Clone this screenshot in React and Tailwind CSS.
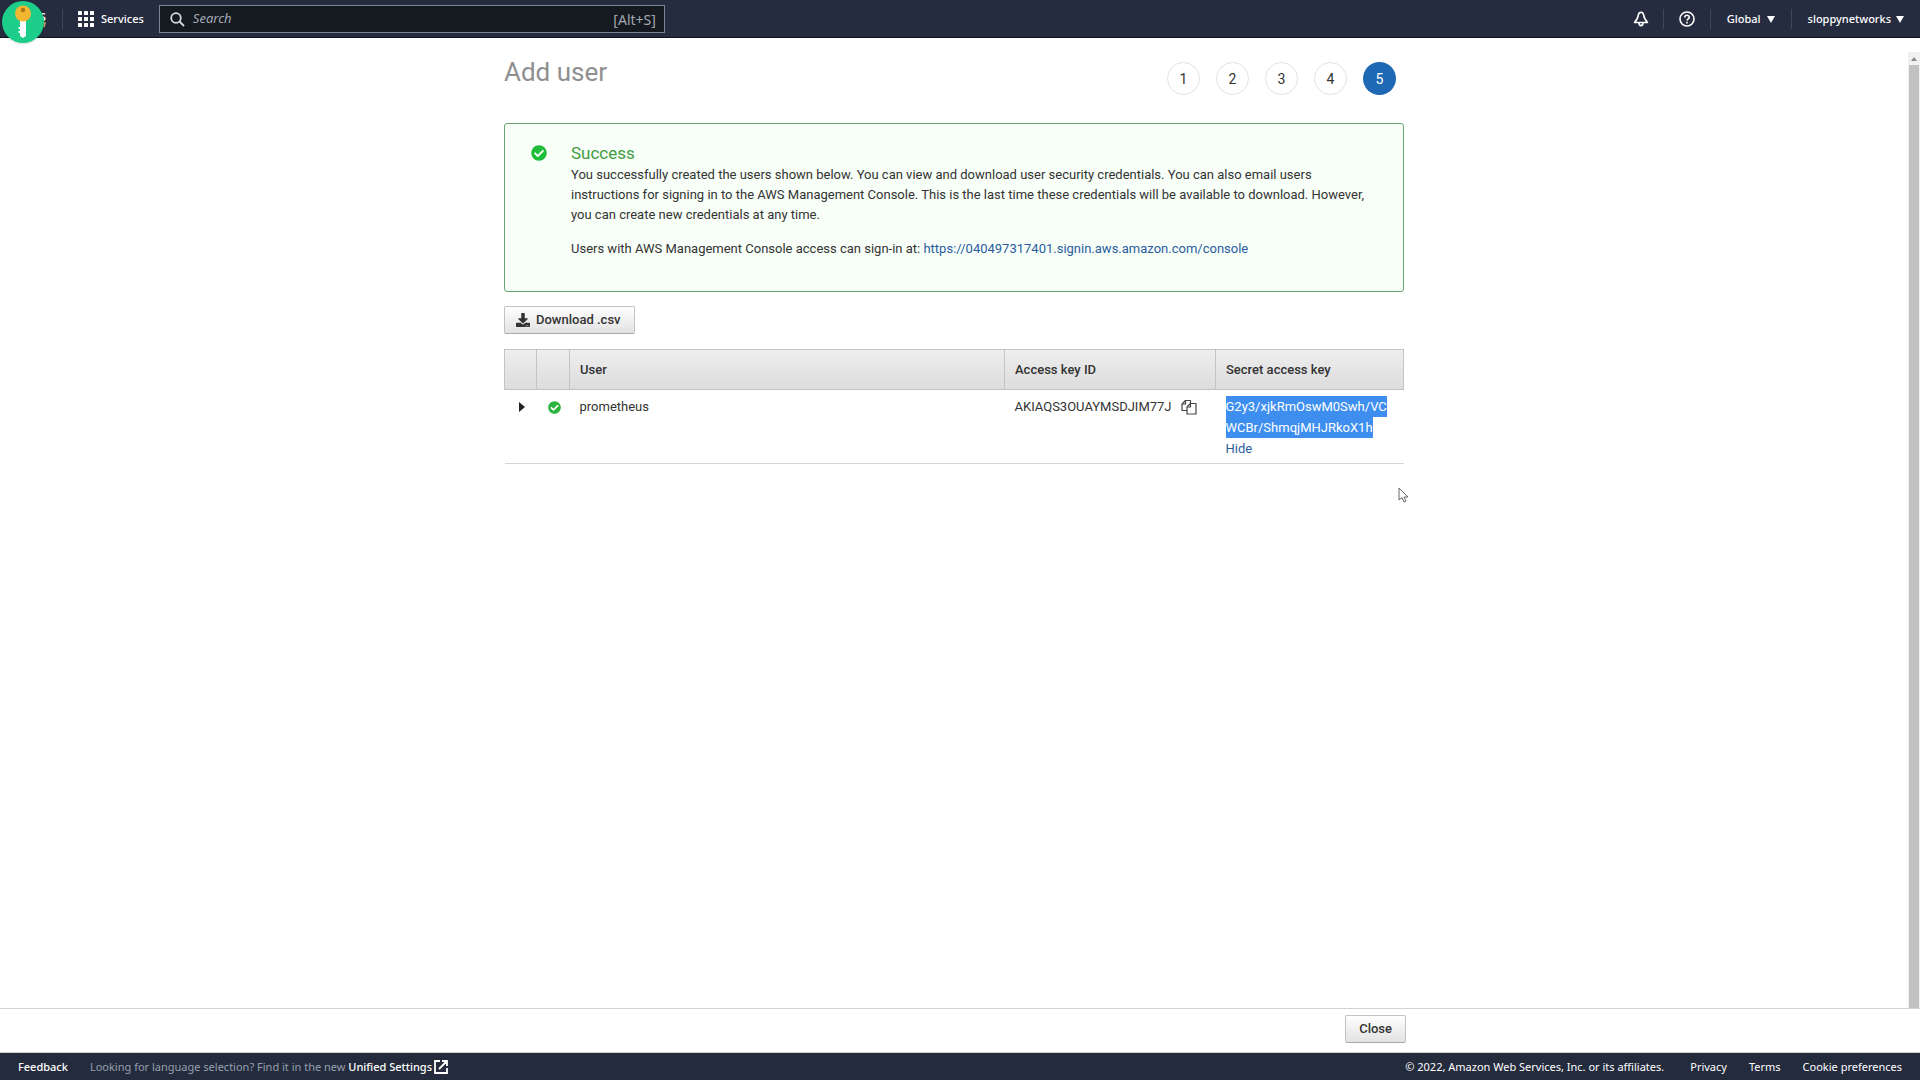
import React, { useState } from "react";
import { FaCheckCircle, FaDownload } from "react-icons/fa";

const STEPS = [1, 2, 3, 4, 5];

const USERS = [
  {
    name: "prometheus",
    accessKeyId: "AKIAQS3OUAYMSDJIM77J",
    secret: ["G2y3/xjkRmOswM0Swh/VC", "WCBr/ShmqjMHJRkoX1h"],
  },
];

const Divider = () => <div className="h-5 w-px bg-[#3f4658]" />;

const Caret = () => (
  <svg width="8" height="7" viewBox="0 0 8 7" fill="currentColor">
    <path d="M0 0h8L4 7z" />
  </svg>
);

const KeyBadge = () => (
  <div className="absolute left-0.5 top-px z-10 flex h-[42px] w-[42px] items-center justify-center rounded-full bg-[#1dce8a] shadow">
    <svg width="18" height="34" viewBox="0 0 18 34">
      <path d="M6 14h6v17l-3 2-3-2v-3h-1.500v-2H6v-2H4.500v-2H6z" fill="#fff" />
      <circle cx="9" cy="8.500" r="8" fill="#f2b632" />
      <circle cx="9" cy="5" r="2.200" fill="#a87716" />
    </svg>
  </div>
);

const Header = () => (
  <header className="relative flex h-[38px] items-center border-b border-[#0d111c] bg-[#262c3f] pt-px text-[11px] font-medium text-white">
    <KeyBadge />
    <a href="#home" className="flex w-[62px] flex-col items-end pr-4 leading-none">
      <span className="text-sm leading-3">aws</span>
      <svg width="24" height="7" viewBox="0 0 24 7" fill="none" stroke="#e0a070" strokeWidth="1.500">
        <path d="M1 1c6 5 14 5 20 2M19 1h4l-1 4" />
      </svg>
    </a>
    <Divider />
    <button className="ml-[15px] flex items-center gap-[7px]">
      <svg width="16" height="16" viewBox="0 0 16 16" fill="#fff">
        {[0, 6, 12].map((y) =>
          [0, 6, 12].map((x) => (
            <rect key={`${x}-${y}`} x={x} y={y} width="4" height="4" rx="0.500" />
          ))
        )}
      </svg>
      Services
    </button>
    <div className="ml-[15px] flex h-7 w-[506px] items-center border border-[#7d8594] bg-[#151920] pl-2.5 pr-2 text-[14px] font-normal text-[#a3a9b3]">
      <svg width="15" height="15" viewBox="0 0 15 15" fill="none" stroke="#d5dbdb" strokeWidth="1.800">
        <circle cx="6" cy="6" r="4.800" />
        <path d="M9.500 9.500L14 14" />
      </svg>
      <input
        type="text"
        aria-label="Search"
        placeholder="Search"
        className="ml-2 min-w-0 flex-1 bg-transparent text-[13px] italic outline-none placeholder:text-[#a3a9b3]"
      />
      <span>[Alt+S]</span>
    </div>
    <div className="ml-auto flex items-center">
      <button aria-label="Notifications" className="mr-[14px]">
        <svg width="16" height="16" viewBox="0 0 16 16" fill="none" stroke="#fff" strokeWidth="1.600" strokeLinejoin="round">
          <path d="M8 1.200c-1.800 0-2.500 1.300-2.800 3.300C5 7 4.500 8 1.500 11.500h13C11.500 8 11 7 10.800 4.500 10.500 2.500 9.800 1.200 8 1.200z" />
          <path d="M6 12c0 3.500 4 3.500 4 0" />
        </svg>
      </button>
      <Divider />
      <button aria-label="Help" className="mx-[15px]">
        <svg width="16" height="16" viewBox="0 0 16 16" fill="none" stroke="#fff" strokeWidth="1.600">
          <circle cx="8" cy="8" r="7" />
          <path d="M5.800 6.500c0-3 4.500-2.800 4.500-.3C10.300 7.800 8 7.800 8 9.600" />
          <path d="M8 10.800v1.600" />
        </svg>
      </button>
      <Divider />
      <button className="mx-4 flex items-center gap-1.5">
        Global <Caret />
      </button>
      <Divider />
      <button className="mx-4 flex items-center gap-[5px]">
        sloppynetworks <Caret />
      </button>
    </div>
  </header>
);

const SuccessBox = () => (
  <section className="mt-7 flex rounded-[3px] border border-[#6aa66f] bg-[#f8fff8] pb-8 pl-[26px] pr-7 pt-[19px]">
    <FaCheckCircle className="mt-[2px] h-4 w-4 shrink-0 text-[#1fbd3a]" />
    <div className="ml-6">
      <h2 className="mb-0.5 text-[17px] leading-5 text-[#3f9c3f]">Success</h2>
      <p className="leading-5">
        You successfully created the users shown below. You can view and
        download user security credentials. You can also email users
        instructions for signing in to the AWS Management Console. This is the
        last time these credentials will be available to download. However, you
        can create new credentials at any time.
      </p>
      <p className="mt-[14px] leading-5">
        Users with AWS Management Console access can sign-in at:{" "}
        <a href="https://040497317401.signin.aws.amazon.com/console" className="text-[#2a5c9e]">
          https://040497317401.signin.aws.amazon.com/console
        </a>
      </p>
    </div>
  </section>
);

const CopyIcon = () => (
  <svg width="16" height="16" viewBox="0 0 16 16" fill="none" stroke="#444" strokeWidth="1.200" strokeLinejoin="round">
    <path d="M6 11.500H1V5l3.500-3.500H9.500V5" />
    <path d="M4.500 1.500V5H1" />
    <path d="M6 8l3.500-3.500H15V15H6z" />
    <path d="M9.500 4.500V8H6" />
  </svg>
);

const UserTable = () => {
  const [showSecret, setShowSecret] = useState(true);
  const th = "border border-[#c4c4c4] px-2.5 text-left font-medium";

  return (
    <table className="mt-[15px] w-full table-fixed border-collapse">
      <colgroup>
        <col className="w-8" />
        <col className="w-[33px]" />
        <col />
        <col className="w-[211px]" />
        <col className="w-[188px]" />
      </colgroup>
      <thead>
        <tr className="h-10 bg-linear-to-b from-[#eeeeee] to-[#dcdcdc]">
          <th className={th} aria-label="Expand" />
          <th className={th} aria-label="Status" />
          <th className={th}>User</th>
          <th className={th}>Access key ID</th>
          <th className={th}>Secret access key</th>
        </tr>
      </thead>
      <tbody>
        {USERS.map((user) => (
          <tr key={user.name} className="border-b border-[#d5d5d5] align-top leading-[21px]">
            <td className="pt-3">
              <button aria-label="Show details" className="block pl-[14px]">
                <svg width="6" height="10" viewBox="0 0 6 10" fill="#222">
                  <path d="M0 0l6 5-6 5z" />
                </svg>
              </button>
            </td>
            <td className="pl-[11px] pt-[11px]">
              <FaCheckCircle className="h-[13px] w-[13px] text-[#2bb53f]" />
            </td>
            <td className="px-2.5 pt-1.5">{user.name}</td>
            <td className="px-2.5 pt-1.5">
              <div className="flex items-center gap-[9px]">
                {user.accessKeyId}
                <button aria-label="Copy access key ID">
                  <CopyIcon />
                </button>
              </div>
            </td>
            <td className="px-2.5 pb-1 pt-1.5">
              {showSecret &&
                user.secret.map((line) => (
                  <span key={line} className="block w-fit bg-[#3d8eef] text-white">
                    {line}
                  </span>
                ))}
              <button onClick={() => setShowSecret(!showSecret)} className="block text-[#2a5c9e]">
                {showSecret ? "Hide" : "Show"}
              </button>
            </td>
          </tr>
        ))}
      </tbody>
    </table>
  );
};

const Scrollbar = () => (
  <div className="mt-[14px] flex w-3 flex-col items-center bg-[#f1f1f1]">
    <svg width="12" height="13" viewBox="0 0 12 13" fill="#8a8a8a">
      <path d="M3 9l3-4 3 4z" />
    </svg>
    <div className="w-[10px] flex-1 bg-[#c1c1c1]" />
  </div>
);

const Footer = () => (
  <footer className="flex h-[27px] items-center bg-[#242b3d] px-[18px] pt-px text-[11px] text-white">
    <a href="#feedback" className="font-medium">Feedback</a>
    <p className="ml-[22px] text-[#95a0ad]">
      Looking for language selection? Find it in the new{" "}
      <a href="#settings" className="font-medium text-white">
        Unified Settings
      </a>
    </p>
    <svg className="ml-0.5" width="14" height="14" viewBox="0 0 14 14" fill="none" stroke="#fff" strokeWidth="1.800">
      <path d="M6 1H1v12h12V8M8 1h5v5M13 1L5 9" />
    </svg>
    <span className="ml-auto">© 2022, Amazon Web Services, Inc. or its affiliates.</span>
    <a href="#privacy" className="ml-[26px]">Privacy</a>
    <a href="#terms" className="ml-[22px]">Terms</a>
    <a href="#cookies" className="ml-[22px]">Cookie preferences</a>
  </footer>
);

const button =
  "flex h-7 items-center rounded-[2px] border border-[#c3c3c3] border-b-[#a9a9a9] bg-linear-to-b from-white to-[#e2e2e2] font-medium text-[#333]";

const App = () => (
  <div className="flex min-h-screen flex-col bg-white font-['Noto_Sans',sans-serif]">
    <Header />
    <div className="flex flex-1 font-['Roboto',sans-serif] text-[13px] text-[#333]">
      <main className="relative flex-1">
        <div className="mx-auto max-w-[900px] pt-[18px]">
          <div className="flex items-start justify-between">
            <h1 className="text-[26px] leading-8 text-[#8f8f8f]">Add user</h1>
            <ol className="mt-[6px] flex gap-4 pr-2 text-[14px]">
              {STEPS.map((step) => (
                <li
                  key={step}
                  className={
                    step === 5
                      ? "flex h-[33px] w-[33px] items-center justify-center rounded-full bg-[#1f68b3] pt-0.5 text-white"
                      : "flex h-[33px] w-[33px] items-center justify-center rounded-full border border-[#e6e0e2] pt-0.5"
                  }
                >
                  {step}
                </li>
              ))}
            </ol>
          </div>
          <SuccessBox />
          <button className={`${button} mt-[14px] gap-1.5 px-[11px] pr-[13px]`}>
            <FaDownload className="h-[14px] w-[14px]" />
            Download .csv
          </button>
          <UserTable />
        </div>
        {/* mouse pointer */}
        <svg className="absolute left-[1398px] top-[449px]" width="11" height="16" viewBox="0 0 11 16" fill="#fff" stroke="#666">
          <path d="M1 1v12l3-2.500L6 15l2-1-2-4h4z" />
        </svg>
      </main>
      <Scrollbar />
    </div>
    <div className="h-[45px] border-y border-[#d0d3d6] pr-2 font-['Roboto',sans-serif] text-[13px]">
      <div className="mx-auto flex max-w-[900px] justify-end pt-[6px]">
        <button className={`${button} px-[13px]`}>Close</button>
      </div>
    </div>
    <Footer />
  </div>
);

export default App;
